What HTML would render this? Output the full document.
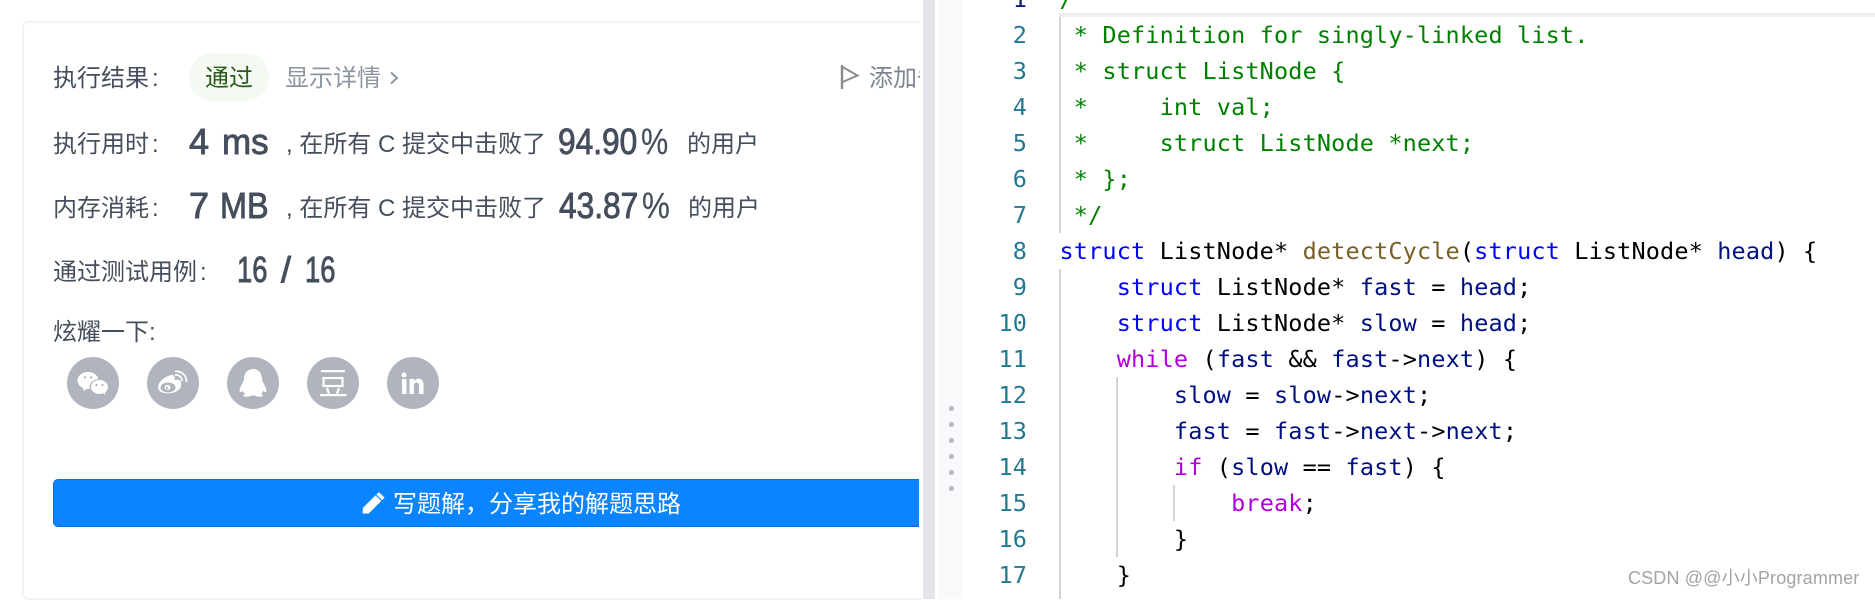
<!DOCTYPE html>
<html lang="zh">
<head>
<meta charset="utf-8">
<style>
html,body{margin:0;padding:0;background:#fff;}
body{position:relative;width:1875px;height:599px;overflow:hidden;font-family:"Liberation Sans","Noto Sans CJK SC",sans-serif;}
.a{position:absolute;white-space:pre;}
.t{font-size:24px;line-height:34px;height:34px;color:#454e5c;}
.t i{font-style:normal;margin-left:3px;}
.n{font-size:36px;line-height:40px;height:40px;color:#454e5c;-webkit-text-stroke:.9px #454e5c;transform-origin:0 50%;}
.pc{-webkit-text-stroke:.2px #454e5c;}
.ln{position:absolute;left:960px;width:67px;text-align:right;font-family:"DejaVu Sans Mono",monospace;font-size:23.5px;line-height:36px;color:#237893;letter-spacing:.1px;}
.c{position:absolute;left:1059.5px;font-family:"DejaVu Sans Mono",monospace;font-size:23.5px;line-height:36px;letter-spacing:.15px;white-space:pre;color:#000;}
.g{color:#008000}.k{color:#0000ff}.f{color:#795e26}.v{color:#001080}.p{color:#af00db}
.guide{position:absolute;width:2px;background:#d3d3d3;}
.dot{position:absolute;left:949px;width:5px;height:5px;border-radius:50%;background:#b3b6c0;}
</style>
</head>
<body>
<!-- left panel -->
<div class="a" style="left:22px;top:21px;width:897px;height:575px;border:2px solid #f3f3f3;border-right:0;border-radius:6px 0 0 6px;box-sizing:content-box;"></div>

<div class="a t" style="left:53px;top:62px;">执行结果<i>:</i></div>
<div class="a" style="left:189px;top:53px;width:80px;height:48px;border-radius:24px;background:#f4f9f1;"></div>
<div class="a t" style="left:205px;top:62px;color:#2c5a1c;">通过</div>
<div class="a t" style="left:285px;top:62px;color:#8d95a2;">显示详情</div>
<svg class="a" style="left:388px;top:70px;" width="12" height="16" viewBox="0 0 12 16"><path d="M3 2.5 L9 8 L3 13.5" fill="none" stroke="#8d95a2" stroke-width="2"/></svg>

<svg class="a" style="left:838px;top:62px;" width="24" height="30" viewBox="0 0 24 30"><path d="M4 3 V27" stroke="#8c8c8c" stroke-width="2.4" fill="none"/><path d="M4.5 5 L19.5 13.5 L4.5 20" fill="none" stroke="#8c8c8c" stroke-width="2"/></svg>
<div class="a t" style="left:869px;top:62px;width:51px;overflow:hidden;color:#7f8590;">添加备注</div>

<div class="a t" style="left:53px;top:128px;">执行用时<i>:</i></div>
<div class="a n" style="left:189px;top:122px;">4</div>
<div class="a n" style="left:222px;top:122px;transform:scaleX(.97);">ms</div>
<div class="a t" style="left:286px;top:128px;">, 在所有 C 提交中击败了</div>
<div class="a n" style="left:558px;top:122px;transform:scaleX(.88);">94.90</div>
<div class="a n pc" style="left:641px;top:122px;transform:scaleX(.85);">%</div>
<div class="a t" style="left:687px;top:128px;">的用户</div>

<div class="a t" style="left:53px;top:192px;">内存消耗<i>:</i></div>
<div class="a n" style="left:189px;top:186px;">7</div>
<div class="a n" style="left:220px;top:186px;transform:scaleX(.9);">MB</div>
<div class="a t" style="left:286px;top:192px;">, 在所有 C 提交中击败了</div>
<div class="a n" style="left:559px;top:186px;transform:scaleX(.88);">43.87</div>
<div class="a n pc" style="left:642px;top:186px;transform:scaleX(.87);">%</div>
<div class="a t" style="left:688px;top:192px;">的用户</div>

<div class="a t" style="left:53px;top:256px;">通过测试用例<i>:</i></div>
<div class="a n" style="left:237px;top:250px;transform:scaleX(.76);">16</div>
<div class="a n" style="left:281px;top:250px;">/</div>
<div class="a n" style="left:305px;top:250px;transform:scaleX(.76);">16</div>

<div class="a t" style="left:53px;top:316px;">炫耀一下:</div>

<!-- share icons -->
<svg class="a" style="left:0;top:350px;" width="460" height="70" viewBox="0 350 460 70">
  <circle cx="93" cy="383" r="26" fill="#b0b4bc"/>
  <circle cx="173" cy="383" r="26" fill="#b0b4bc"/>
  <circle cx="253" cy="383" r="26" fill="#b0b4bc"/>
  <circle cx="333" cy="383" r="26" fill="#b0b4bc"/>
  <circle cx="413" cy="383" r="26" fill="#b0b4bc"/>
  <!-- wechat -->
  <ellipse cx="88" cy="380.5" rx="10.5" ry="8.5" fill="#fff"/>
  <path d="M83 387 L83.5 391 L88 388Z" fill="#fff"/>
  <ellipse cx="99.5" cy="387" rx="10" ry="8" fill="#b0b4bc"/>
  <ellipse cx="99.5" cy="387" rx="8.5" ry="7" fill="#fff"/>
  <path d="M103 392 L105 395 L105.5 391Z" fill="#fff"/>
  <circle cx="85" cy="377.5" r="1.2" fill="#b0b4bc"/><circle cx="91" cy="377.5" r="1.2" fill="#b0b4bc"/>
  <circle cx="96.5" cy="385" r="1.1" fill="#b0b4bc"/><circle cx="102.5" cy="385" r="1.1" fill="#b0b4bc"/>
  <!-- weibo -->
  <path d="M158 387 C158 382 165 376 172 375 C175 374.500 175 378 174 380 C178 379 182 380 181 384 C182 390 174 393.500 168 393.500 C162 393.500 158 391 158 387Z" fill="#fff"/>
  <ellipse cx="168" cy="387.500" rx="7.500" ry="5" fill="#b0b4bc"/>
  <ellipse cx="167.500" cy="387.500" rx="3" ry="2.500" fill="#fff"/>
  <circle cx="167" cy="388" r="1.200" fill="#b0b4bc"/>
  <path d="M175 375 A6 6 0 0 1 182 381" fill="none" stroke="#fff" stroke-width="1.800"/>
  <path d="M175 371.500 A10 10 0 0 1 186.500 382" fill="none" stroke="#fff" stroke-width="1.800"/>
  <!-- qq -->
  <path d="M253 369 C259 369 262 374 262 379 C262 381 263 382 264.500 385 C266 388 267 391 266 392 C265 392.500 264 391.500 263.500 390.500 C263 392 262 393 261 394 C263 395 263.500 396.500 262 396.500 C259 397 256 396.500 254.500 395.500 H251.500 C250 396.500 247 397 244 396.500 C242.500 396.500 243 395 245 394 C244 393 243 392 242.500 390.500 C242 391.500 241 392.500 240 392 C239 391 240 388 241.500 385 C243 382 244 381 244 379 C244 374 247 369 253 369Z" fill="#fff"/>
  <!-- douban -->
  <rect x="321" y="370" width="24" height="2.200" fill="#fff"/>
  <rect x="323.500" y="378" width="19" height="8" fill="none" stroke="#fff" stroke-width="2.200"/>
  <rect x="320" y="394" width="26.500" height="2.200" fill="#fff"/>
  <path d="M327 388 L329 394 M339 388 L337 394" stroke="#fff" stroke-width="2.200" fill="none"/>
  <!-- in -->
  <circle cx="404" cy="375" r="2.500" fill="#fff"/>
  <rect x="402" y="379" width="4.500" height="15" fill="#fff"/>
  <path d="M409.500 379 H414 V381 C415 379.500 417 378.800 418.500 378.800 C422 378.800 423.500 381 423.500 384.500 V394 H419 V385.500 C419 383.500 418 382.500 416.500 382.500 C415 382.500 414 383.700 414 385.500 V394 H409.500Z" fill="#fff"/>
</svg>

<!-- button -->
<div class="a" style="left:53px;top:479px;width:866px;height:48px;box-sizing:border-box;background:#0a84ff;border:1.500px solid #0a6fd8;border-right:0;border-radius:5px 0 0 5px;"></div>
<svg class="a" style="left:360px;top:491px;" width="26" height="26" viewBox="0 0 26 26"><path d="M3 22 L3.500 17 L15.500 5 L20.500 10 L8.500 22Z M17 3.500 L19 1.800 L24 6.800 L22 8.500Z" fill="#fff" stroke="#fff" stroke-width="1" stroke-linejoin="round"/></svg>
<div class="a" style="left:393px;top:488px;font-size:24px;line-height:34px;color:#fff;">写题解&#xFF0C;分享我的解题思路</div>

<!-- divider -->
<div class="a" style="left:923px;top:0;width:12px;height:599px;background:#e4e5ea;"></div>
<div class="a" style="left:939px;top:0;width:24px;height:599px;background:#f8f9fb;"></div>
<div class="dot" style="top:406px"></div>
<div class="dot" style="top:422px"></div>
<div class="dot" style="top:438px"></div>
<div class="dot" style="top:454px"></div>
<div class="dot" style="top:470px"></div>
<div class="dot" style="top:486px"></div>

<!-- editor -->
<div class="a" style="left:1059px;top:13px;width:816px;height:4px;background:#eeeeee;"></div>
<div class="guide" style="left:1059px;top:17px;height:216px;"></div>
<div class="guide" style="left:1059px;top:269px;height:330px;"></div>
<div class="guide" style="left:1116px;top:377px;height:180px;"></div>
<div class="guide" style="left:1173px;top:485px;height:36px;"></div>

<div class="ln" style="top:-19px;color:#0b216f;">1</div>
<div class="ln" style="top:17px;">2</div>
<div class="ln" style="top:53px;">3</div>
<div class="ln" style="top:89px;">4</div>
<div class="ln" style="top:125px;">5</div>
<div class="ln" style="top:161px;">6</div>
<div class="ln" style="top:197px;">7</div>
<div class="ln" style="top:233px;">8</div>
<div class="ln" style="top:269px;">9</div>
<div class="ln" style="top:305px;">10</div>
<div class="ln" style="top:341px;">11</div>
<div class="ln" style="top:377px;">12</div>
<div class="ln" style="top:413px;">13</div>
<div class="ln" style="top:449px;">14</div>
<div class="ln" style="top:485px;">15</div>
<div class="ln" style="top:521px;">16</div>
<div class="ln" style="top:557px;">17</div>

<div class="c g" style="top:-19px;">/</div>
<div class="c g" style="top:17px;"> * Definition for singly-linked list.</div>
<div class="c g" style="top:53px;"> * struct ListNode {</div>
<div class="c g" style="top:89px;"> *     int val;</div>
<div class="c g" style="top:125px;"> *     struct ListNode *next;</div>
<div class="c g" style="top:161px;"> * };</div>
<div class="c g" style="top:197px;"> */</div>
<div class="c" style="top:233px;"><span class="k">struct</span> ListNode* <span class="f">detectCycle</span>(<span class="k">struct</span> ListNode* <span class="v">head</span>) {</div>
<div class="c" style="top:269px;">    <span class="k">struct</span> ListNode* <span class="v">fast</span> = <span class="v">head</span>;</div>
<div class="c" style="top:305px;">    <span class="k">struct</span> ListNode* <span class="v">slow</span> = <span class="v">head</span>;</div>
<div class="c" style="top:341px;">    <span class="p">while</span> (<span class="v">fast</span> &amp;&amp; <span class="v">fast</span>-&gt;<span class="v">next</span>) {</div>
<div class="c" style="top:377px;">        <span class="v">slow</span> = <span class="v">slow</span>-&gt;<span class="v">next</span>;</div>
<div class="c" style="top:413px;">        <span class="v">fast</span> = <span class="v">fast</span>-&gt;<span class="v">next</span>-&gt;<span class="v">next</span>;</div>
<div class="c" style="top:449px;">        <span class="p">if</span> (<span class="v">slow</span> == <span class="v">fast</span>) {</div>
<div class="c" style="top:485px;">            <span class="p">break</span>;</div>
<div class="c" style="top:521px;">        }</div>
<div class="c" style="top:557px;">    }</div>

<!-- watermark -->
<div class="a" style="left:1628px;top:566px;font-size:18px;line-height:24px;letter-spacing:.15px;color:#a3a3a3;">CSDN @@小小Programmer</div>
</body>
</html>
